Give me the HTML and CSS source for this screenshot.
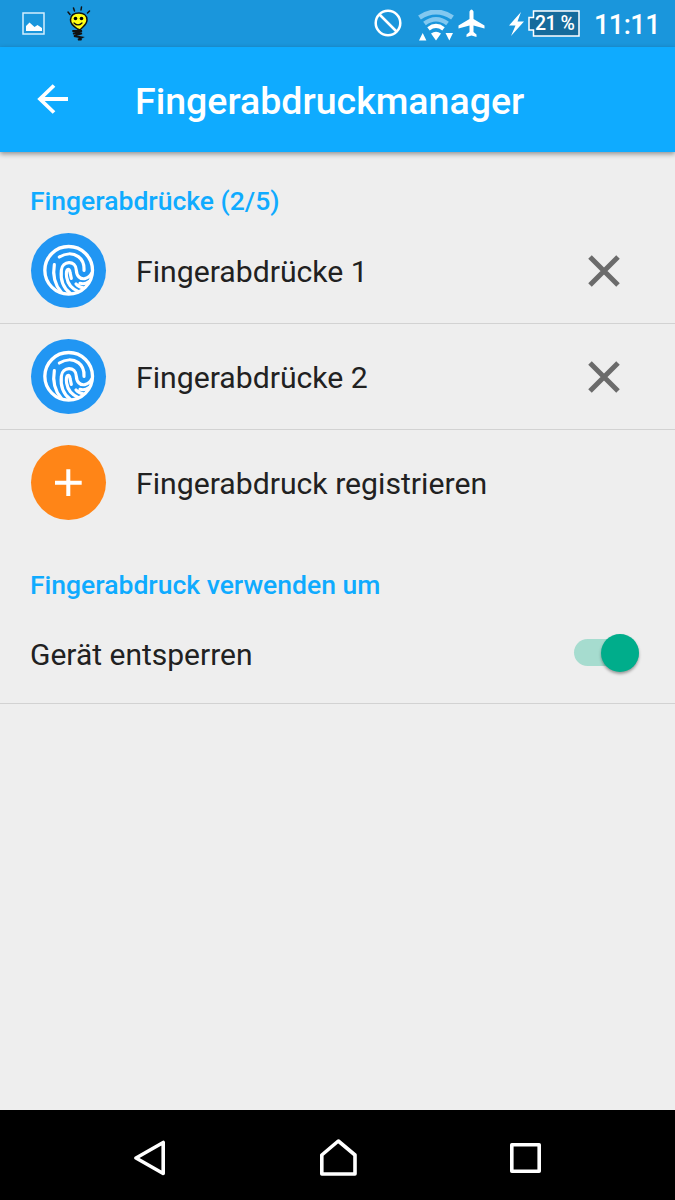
FILE: index.html
```html
<!DOCTYPE html>
<html lang="de">
<head>
<meta charset="utf-8">
<title>Fingerabdruckmanager</title>
<link rel="stylesheet" href="styles.css">
</head>
<body>
<svg class="defs" width="0" height="0" aria-hidden="true">
  <symbol id="fingerprint" viewBox="33 25 225 225">
    <g fill="none" stroke="#fff" stroke-width="9.500" stroke-linecap="round" stroke-linejoin="round">
      <circle cx="146" cy="137" r="71.500" stroke-width="10"/>
      <path d="M118 97C136 86 158 84 175 96C189 106 193 118 192 137"/>
      <path d="M103 120C98 148 103 178 124 203"/>
      <path d="M151 206C130 190 121 165 124 137C126 107 168 105 169 137C170 155 181 164 194 162Q208 159 215 146"/>
      <path d="M176 201C153 192 143 177 140 158C136 131 149 128 150 143L154 161"/>
      <path d="M168 178Q177 188 191 190M180 176Q195 180 206 171"/>
    </g>
  </symbol>
  <symbol id="cross" viewBox="0 0 32 32">
    <path d="M2 2l28 28M30 2L2 30" fill="none" stroke="#6b6b6b" stroke-width="5"/>
  </symbol>
</svg>
<div class="screen">
  <header class="status">
    <svg class="s-picture" viewBox="0 0 23 23"><path d="M1 1h21v21H1z" fill="none" stroke="#d3eefd" stroke-width="1.500"/><path d="M4 19v-5l3.500-3.500 5 4.500 3-2 4.500 3v3z" fill="#fff"/></svg>
    <svg class="s-bulb" viewBox="0 0 26 36"><g stroke="#111" stroke-linecap="round" fill="none"><path d="M2 6l2 2.500M7.500 2l1 3M15.500 1l-.5 3M23.500 5l-2 2" stroke-width="1.500"/><path d="M11.500 23Q4 18 4.500 13.500C5 8 9 7 13 7s8 2 8 7-5 7-7 10z" fill="#ffff14" stroke-width="1.500"/><path d="M8 17Q12 21 16 17" stroke-width="1.200"/><path d="M7 25h9l-9 2.500h9l-8 2.500 8 1.500-4 2h3" stroke-width="1.800"/></g><circle cx="9.500" cy="12.500" r="1.800"/><circle cx="15.500" cy="12.500" r="1.800"/></svg>
    <span class="spacer"></span>
    <svg class="s-none" viewBox="0 0 28 28"><g fill="none" stroke="#fff" stroke-width="2.500"><circle cx="14" cy="14" r="12.300"/><path d="M5.500 5.500l17 17"/></g></svg>
    <svg class="s-wifi" viewBox="0 0 36 32"><g fill="none"><path d="M1.500 7.500Q18-3.500 34.500 7.500" stroke="#82c8f0" stroke-width="5"/><path d="M6.500 13.500Q18 5 29.500 13.500" stroke="#82c8f0" stroke-width="4.500"/><path d="M10.500 18.800Q18 13 25.500 18.800" stroke="#fff" stroke-width="4"/></g><path d="M13 23.500Q18 20 23 23.500L18 30.500zM1 30.500l3.700-7.500 3.700 7.500zM27.500 23h7.500l-3.700 7.500z" fill="#fff"/></svg>
    <svg class="s-plane" viewBox="0 0 27 28"><path d="M11.500 2.500Q13.500-1.500 15.500 2.500V10L26.500 16.500V19.500L15.500 16.500V23L18.500 25.500V28L13.500 26.500 8.500 28V25.500L11.500 23V16.500L.5 19.500V16.500L11.500 10z" fill="#fff"/></svg>
    <svg class="s-bolt" viewBox="0 0 15 24"><path d="M12 0L0 13.500h6.500L2 24 15 9.500H8.500z" fill="#fff"/></svg>
    <span class="battery">
      <svg class="battery-case" viewBox="0 0 52 27"><path d="M5.500 1H51v25H5.500v-6H1V7.500h4.500z" fill="#156b9c" stroke="#fff" stroke-width="1.500"/></svg>
      <span class="battery-level">21 %</span>
    </span>
    <span class="clock">11:11</span>
  </header>
  <nav class="toolbar">
    <svg class="back" viewBox="0 0 32 30"><path d="M31 15H3M17 1.500L3 15l14 13.500" fill="none" stroke="#fff" stroke-width="3.800"/></svg>
    <h1 class="title">Fingerabdruckmanager</h1>
  </nav>
  <main class="content">
    <h2 class="section">Fingerabdrücke (2/5)</h2>
    <div class="row">
      <span class="badge"><svg class="badge-icon"><use href="#fingerprint"/></svg></span>
      <span class="label">Fingerabdrücke 1</span>
      <svg class="remove"><use href="#cross"/></svg>
    </div>
    <div class="row">
      <span class="badge"><svg class="badge-icon"><use href="#fingerprint"/></svg></span>
      <span class="label">Fingerabdrücke 2</span>
      <svg class="remove"><use href="#cross"/></svg>
    </div>
    <div class="row row-add">
      <span class="badge badge-add"><svg class="badge-icon" viewBox="0 0 75 75"><path d="M37.300 24.300v26.700M24 37.700h26.700" stroke="#fff" stroke-width="4"/></svg></span>
      <span class="label">Fingerabdruck registrieren</span>
    </div>
    <h2 class="section section-use">Fingerabdruck verwenden um</h2>
    <div class="row row-unlock">
      <span class="label">Gerät entsperren</span>
      <span class="switch"><span class="thumb"></span></span>
    </div>
  </main>
  <footer class="navbar">
    <svg class="n-back" viewBox="0 0 32 36"><path d="M2 18L29.200 2.500v31z" fill="none" stroke="#fff" stroke-width="3.600" stroke-linejoin="round"/></svg>
    <svg class="n-home" viewBox="0 0 37 37"><path d="M1.800 35V16L18.300 2 35 16v19z" fill="none" stroke="#fff" stroke-width="3.600" stroke-linejoin="round"/></svg>
    <svg class="n-recent" viewBox="0 0 31 30"><path d="M1.800 1.800h27.400v26.400H1.800z" fill="none" stroke="#fff" stroke-width="3.600" stroke-linejoin="round"/></svg>
  </footer>
</div>
</body>
</html>
```
FILE: styles.css
```css
* { box-sizing: border-box; }
body { margin: 0; font-family: Roboto, sans-serif; color: #212121; }
svg { display: block; flex: none; }
.defs { position: absolute; }
.screen { width: 675px; height: 1200px; display: flex; flex-direction: column; background: #eee; overflow: hidden; }

.status { height: 47px; flex: none; display: flex; align-items: flex-start; background: #1a96dc; color: #fff; }
.spacer { flex: 1; }
.s-picture { width: 23px; height: 23px; margin: 12px 0 0 22px; }
.s-bulb { width: 26px; height: 36px; margin: 6px 0 0 21px; }
.s-none { width: 28px; height: 28px; margin: 9px 16px 0 0; }
.s-wifi { width: 36px; height: 32px; margin: 10px 4px 0 0; }
.s-plane { width: 27px; height: 28px; margin: 9px 24px 0 0; }
.s-bolt { width: 15px; height: 24px; margin: 12px 4px 0 0; }
.battery { display: grid; width: 52px; height: 27px; margin: 10px 14px 0 0; }
.battery-case, .battery-level { grid-area: 1 / 1; }
.battery-case { width: 52px; height: 27px; }
.battery-level { padding-left: 7px; font-size: 19.500px; font-weight: 500; line-height: 27px; letter-spacing: -.5px; white-space: nowrap; }
.clock { width: 66px; margin-right: 15px; font-size: 27px; font-weight: 500; line-height: 51px; letter-spacing: -.5px; white-space: nowrap; }

.toolbar { height: 105px; flex: none; display: flex; align-items: center; padding-left: 37px; background: #0fabff; color: #fff; box-shadow: 0 2px 5px rgba(0, 0, 0, .4); }
.back { width: 32px; height: 30px; margin-bottom: 1px; }
.title { margin: 2px 0 0 66px; font-size: 37.500px; font-weight: 500; line-height: 44px; }

.content { flex: 1; }
.section { margin: 0; padding: 34px 30px 0; height: 66px; font-size: 26.500px; line-height: 30px; font-weight: 500; color: #0fabff; }
.row { height: 106px; display: flex; align-items: center; padding: 0 55px 0 31px; border-bottom: 1px solid #d2d2d2; font-size: 30.200px; line-height: 36px; }
.badge { width: 75px; height: 75px; flex: none; margin-right: 30px; border-radius: 50%; background: #2196f3; }
.badge-icon { width: 75px; height: 75px; }
.badge-add { background: #ff8517; }
.label { flex: 1; padding-top: 3px; white-space: nowrap; }
.remove { width: 32px; height: 32px; }
.row-add { height: 105px; border-bottom: 0; }
.section-use { height: 69px; padding-top: 35px; }
.row-unlock { height: 100px; padding: 0 36.500px 0 30px; font-size: 30px; }
.switch { width: 64.500px; height: 27px; margin-bottom: 2px; display: flex; align-items: center; justify-content: flex-end; background: #a6dccf; border-radius: 14px; }
.thumb { width: 38px; height: 38px; flex: none; border-radius: 50%; background: #00ad8b; box-shadow: 0 2px 3px rgba(0, 0, 0, .35); }

.navbar { height: 90px; flex: none; display: flex; align-items: flex-start; padding-left: 134px; background: #000; }
.n-back { width: 32px; height: 36px; margin-top: 30px; }
.n-home { width: 37px; height: 37px; margin: 29px 0 0 153.500px; }
.n-recent { width: 31px; height: 30px; margin: 33px 0 0 153.500px; }
```
